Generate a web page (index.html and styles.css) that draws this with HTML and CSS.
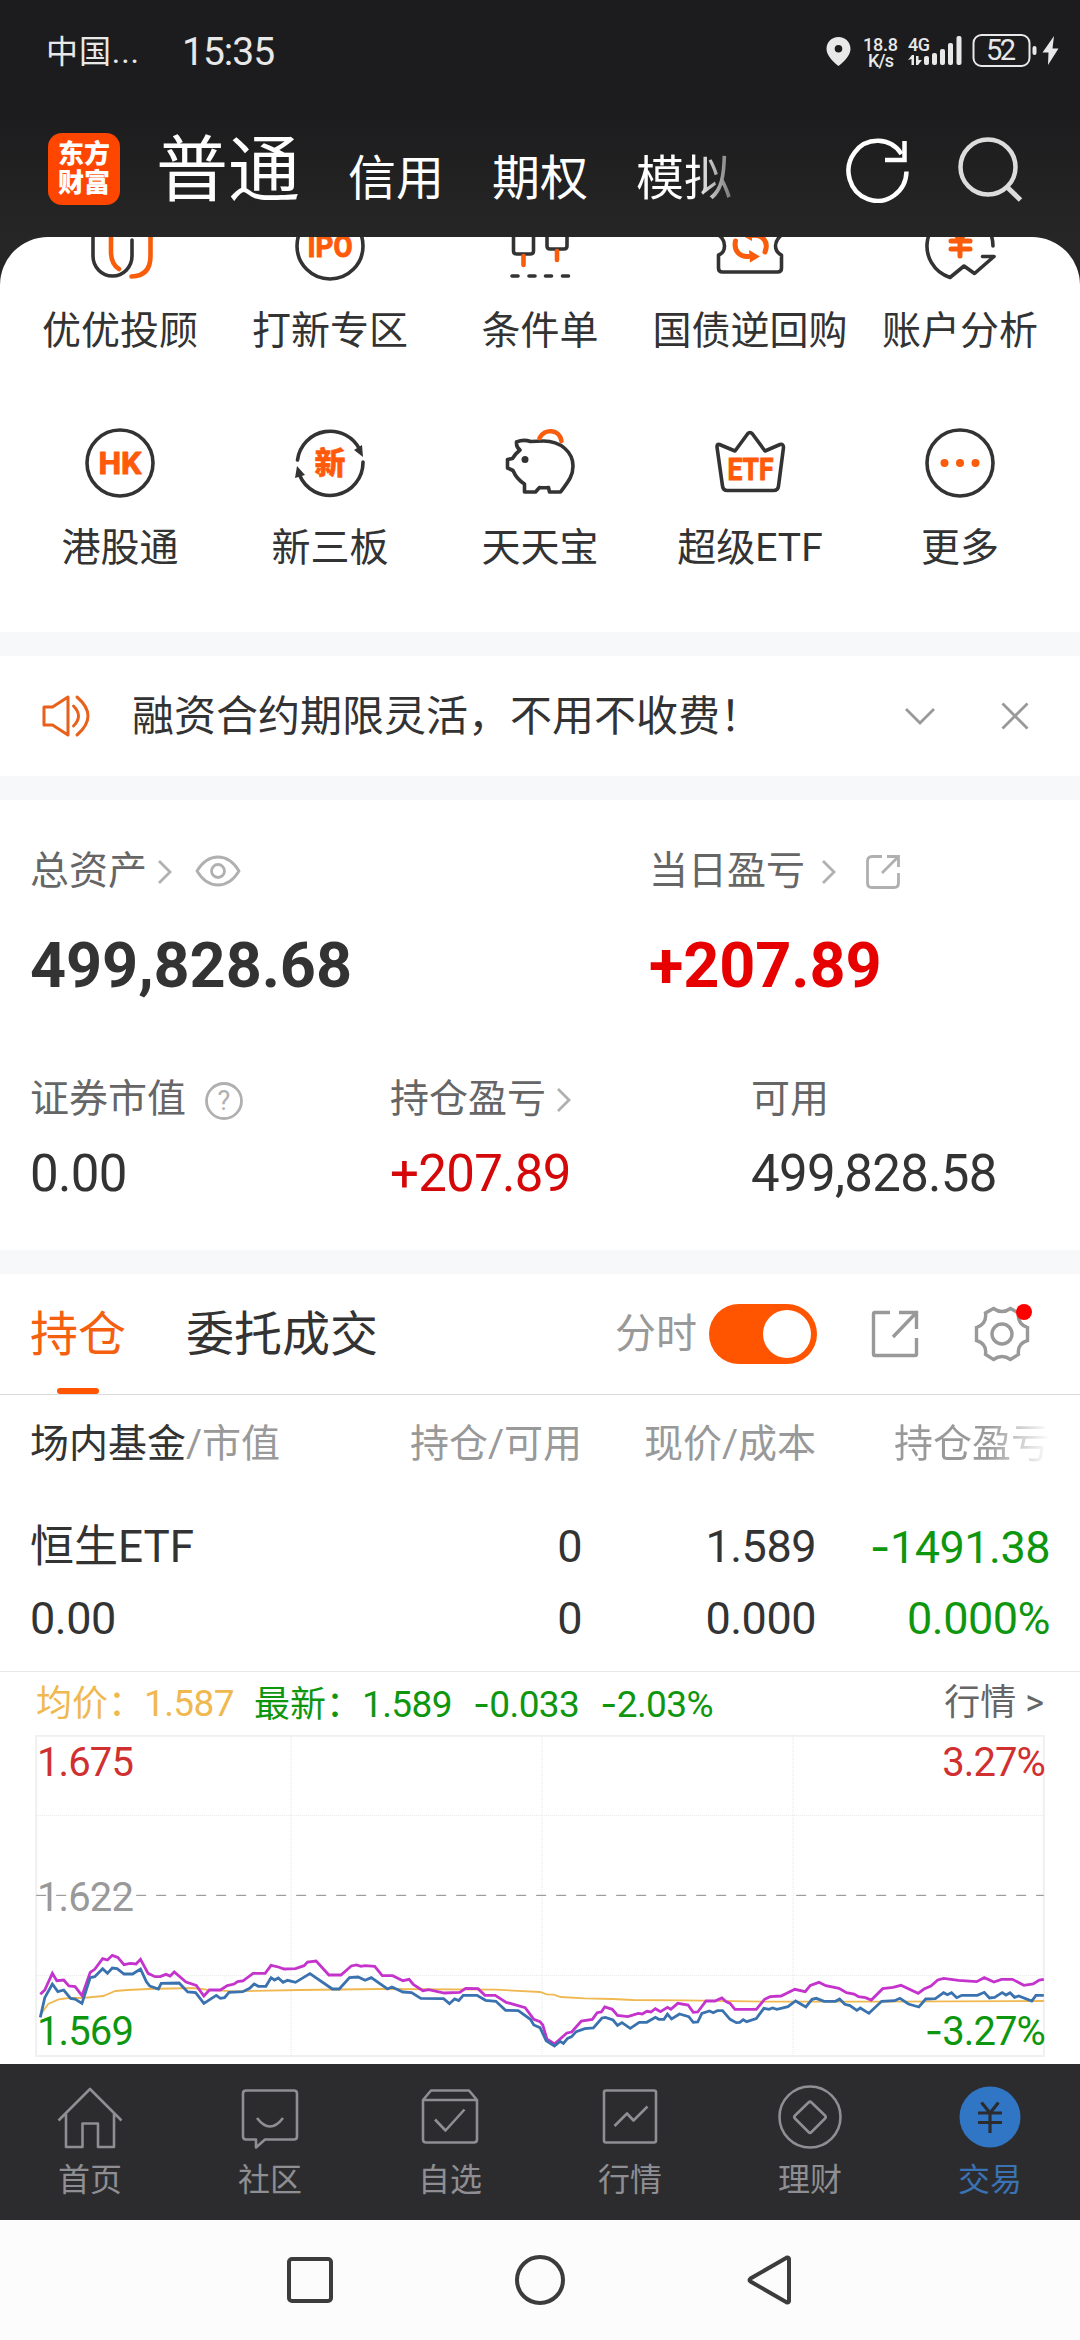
FILE: index.html
```html
<!DOCTYPE html>
<html lang="zh-CN">
<head>
    <meta charset="UTF-8">
    <meta name="viewport" content="width=device-width, initial-scale=1.0">
    <title>东方财富 - 交易</title>
    <link rel="stylesheet" href="styles.css">
</head>
<body>

<div class="phone">

    <!-- Status bar -->
    <div class="status-bar">
        <span class="carrier">中国...</span>
        <span class="clock">15:35</span>
        <svg class="status-icons" width="234" height="40" viewBox="0 0 234 40">
            <path fill="#e8e8e8" fill-rule="evenodd" d="M12.500 5C5.500 5 .500 10 .500 17c0 6 6 12.500 12 17 6-4.500 12-11 12-17 0-7-5-12-12-12zm0 8a3.800 3.800 0 1 1 0 7.600 3.800 3.800 0 0 1 0-7.600z"/>
            <text class="st-small" x="37" y="18.500" textLength="35">18.8</text>
            <text class="st-small" x="42" y="34.500" textLength="26">K/s</text>
            <text class="st-small" x="82" y="18.500" textLength="22">4G</text>
            <g fill="#e8e8e8">
                <path d="M82 28l4-5h2v10h-2.500v-6zM96 28l-4 5h-2V24h2.500v4z"/>
                <rect x="98" y="24" width="5" height="9" rx="2"/>
                <rect x="106" y="21" width="5" height="12" rx="2"/>
                <rect x="114" y="17" width="5" height="16" rx="2"/>
                <rect x="122" y="11" width="5" height="22" rx="2"/>
                <rect x="130.500" y="4" width="5" height="29" rx="2"/>
                <rect x="206.500" y="14" width="4" height="9" rx="2"/>
                <path d="M228 4L216.500 20.500h6L222 33l10.500-16.500h-6z"/>
            </g>
            <rect x="147.500" y="3" width="56" height="31" rx="8" fill="none" stroke="#e8e8e8" stroke-width="2"/>
            <text class="st-battery" x="160" y="28" textLength="30">52</text>
        </svg>
    </div>

    <!-- Header -->
    <header class="header">
        <div class="logo"><span>东方</span><span>财富</span></div>
        <nav class="accounts">
            <a class="active">普通</a>
            <a>信用</a>
            <a>期权</a>
            <a class="fade">模拟</a>
        </nav>
        <svg class="refresh" width="66" height="66" viewBox="0 0 66 66">
            <path d="M62.500 34.500A29 30 0 1 1 57.500 17" fill="none" stroke="#fff" stroke-width="4.500"/>
            <path d="M60.500 4v19H41" fill="none" stroke="#fff" stroke-width="4.500"/>
        </svg>
        <svg class="search" width="66" height="66" viewBox="0 0 66 66">
            <circle cx="31" cy="31" r="27.500" fill="none" stroke="#dcdcdc" stroke-width="4.500"/>
            <path d="M50 51l13.500 13" stroke="#dcdcdc" stroke-width="5"/>
        </svg>
    </header>

    <main class="sheet">

        <!-- Shortcuts -->
        <section class="shortcuts">
            <div class="item">
                <svg class="icon" viewBox="0 0 72 72">
                    <path d="M9 0v46a19.500 20 0 0 0 39 0V30"/>
                    <path class="o" d="M27 10v32q0 12 8 17M66.500 10v36q0 20-19 20.500"/>
                </svg>
                <span>优优投顾</span>
            </div>
            <div class="item">
                <svg class="icon" viewBox="0 0 72 72">
                    <circle cx="36" cy="36" r="33"/>
                    <text x="13.500" y="47" textLength="45" lengthAdjust="spacingAndGlyphs">IPO</text>
                </svg>
                <span>打新专区</span>
            </div>
            <div class="item">
                <svg class="icon" viewBox="0 0 72 72">
                    <path d="M9.500 10v31q0 3 3 3h14q3 0 3-3V10M43 10v26q0 3 3 3h14q3 0 3-3V10"/>
                    <path class="o" d="M19.500 46v9M53 41v9"/>
                    <path d="M8 66h6M25 66h6M41.500 66h6M58.500 66h6"/>
                </svg>
                <span>条件单</span>
            </div>
            <div class="item">
                <svg class="icon" viewBox="0 0 72 72">
                    <path d="M4.500 14v11q6 4 6 11t-6 9v13q0 4 4 4h55q4 0 4-4V45q-6-3-6-9t6-11V14"/>
                    <path class="o thick" d="M21.500 31c-2 10 4 16 13 15.500M51 42c4-10-2-18-14-16.500"/>
                    <path class="of" d="M35 40l11 6.500-10 6zM38 20l-9 6 9 5z"/>
                </svg>
                <span>国债逆回购</span>
            </div>
            <div class="item">
                <svg class="icon" viewBox="0 0 72 72">
                    <path d="M69 36A33 33 0 1 0 26 67.500L40 56l10.500 7.500 19.500-17H58.500"/>
                    <path class="o thick" d="M26 17l10 13 10-13M36 30v16M27 31h19M27 39h19"/>
                </svg>
                <span>账户分析</span>
            </div>
            <div class="item">
                <svg class="icon" viewBox="0 0 72 72">
                    <circle cx="36" cy="36" r="33"/>
                    <text x="14.500" y="47" textLength="43" lengthAdjust="spacingAndGlyphs">HK</text>
                </svg>
                <span>港股通</span>
            </div>
            <div class="item">
                <svg class="icon" viewBox="0 0 72 72">
                    <path d="M3.500 33A33 33 0 0 1 66 23M69 35A33 33 0 0 1 5.500 48"/>
                    <path class="df" d="M60 23l8-5 1 12zM3 39l-2 12 10-3z"/>
                    <text class="cjk" x="20.500" y="47">新</text>
                </svg>
                <span>新三板</span>
            </div>
            <div class="item">
                <svg class="icon" viewBox="0 0 72 72">
                    <path d="M12.500 15q7-3 14-.500 7-.500 13-.500c17 0 29.500 11 29.500 25 0 11-6 17-12.500 26h-11l-1-4.500q-6 .500-9 0L31.500 65h-11v-8Q12.500 52 9 43.500l-5.500-2.500v-8.500l5-1q3-5 7.500-8.500-4-3-3.500-8z"/>
                    <circle class="df" cx="21" cy="32.500" r="3.500"/>
                    <path class="o" d="M35.500 11c5-10 20-9 22 3"/>
                </svg>
                <span>天天宝</span>
            </div>
            <div class="item">
                <svg class="icon" viewBox="0 0 72 72">
                    <path d="M5.500 17.500L21 24 33.500 7q2.500-3 5 0L51 24l15-6.500q3.500-1 3.500 3L64.500 59q-.500 4.500-5 4.500H13.500q-4.500 0-5-4.500L3 20q0-3.500 2.500-2.500z"/>
                    <text x="13.500" y="53" textLength="46" lengthAdjust="spacingAndGlyphs">ETF</text>
                </svg>
                <span>超级ETF</span>
            </div>
            <div class="item">
                <svg class="icon" viewBox="0 0 72 72">
                    <circle cx="36" cy="36" r="33"/>
                    <g class="of"><circle cx="20.500" cy="36" r="4"/><circle cx="36" cy="36" r="4"/><circle cx="51.500" cy="36" r="4"/></g>
                </svg>
                <span>更多</span>
            </div>
        </section>

        <!-- Notice -->
        <section class="notice">
            <svg width="50" height="44" viewBox="0 0 50 44" fill="none" stroke="#e8611c" stroke-width="3" stroke-linejoin="round" stroke-linecap="round">
                <path d="M3 13h8.500L27 3v38L11.500 31H3zM32.500 12q10 10 0 20M36 3q22 19 0 38"/>
            </svg>
            <p>融资合约期限灵活，不用不收费！</p>
            <svg class="down" width="34" height="22" viewBox="0 0 34 22"><path d="M3 4l14 14L31 4"/></svg>
            <svg class="close" width="30" height="30" viewBox="0 0 30 30"><path d="M2.500 2.500l25 25M27.500 2.500l-25 25"/></svg>
        </section>

        <!-- Assets -->
        <section class="assets">
            <div class="total">
                <div>
                    <div class="label"><span>总资产</span>
                        <svg class="arrow" width="18" height="28" viewBox="0 0 18 28"><path d="M3 3l11 11L3 25"/></svg>
                        <svg class="eye" width="46" height="34" viewBox="0 0 46 34"><path d="M2 17C8 7 15 3 23 3s15 4 21 14c-6 10-13 14-21 14S8 27 2 17z"/><circle cx="23" cy="17" r="6.500"/></svg>
                    </div>
                    <div class="big">499,828.68</div>
                </div>
                <div>
                    <div class="label"><span>当日盈亏</span>
                        <svg class="arrow wide" width="18" height="28" viewBox="0 0 18 28"><path d="M3 3l11 11L3 25"/></svg>
                        <svg class="share" width="36" height="36" viewBox="0 0 36 36"><path d="M17 2.500H7q-4.500 0-4.500 4.500v22q0 4.500 4.500 4.500h22q4.500 0 4.500-4.500V19M22 2.500h11.500V13M33 3L17 19"/></svg>
                    </div>
                    <div class="big red">+207.89</div>
                </div>
            </div>
            <div class="detail">
                <div>
                    <div class="label"><span>证券市值</span>
                        <svg class="help" width="40" height="40" viewBox="0 0 40 40"><circle cx="20" cy="20" r="17.500"/><text x="20" y="29">?</text></svg>
                    </div>
                    <div class="num">0.00</div>
                </div>
                <div>
                    <div class="label"><span>持仓盈亏</span>
                        <svg class="arrow" width="18" height="28" viewBox="0 0 18 28"><path d="M3 3l11 11L3 25"/></svg>
                    </div>
                    <div class="num red2">+207.89</div>
                </div>
                <div>
                    <div class="label"><span>可用</span></div>
                    <div class="num">499,828.58</div>
                </div>
            </div>
        </section>

        <!-- Tabs -->
        <section class="tabs">
            <a class="tab active">持仓</a>
            <a class="tab">委托成交</a>
            <span class="switch-label">分时</span>
            <span class="switch"></span>
            <svg class="export" width="48" height="48" viewBox="0 0 48 48"><path d="M19 2.500H4Q2.500 2.500 2.500 4v40q0 1.500 1.500 1.500h40q1.500 0 1.500-1.500V28M28 2.500h17.500V19M45 3L22 27"/></svg>
            <span class="settings">
                <svg width="58" height="58" viewBox="0 0 58 58">
                    <path d="M20.500 3.500q8.500 6 17 0l8 4.500q-1.500 11 9 14.500v13q-10.500 3-9 14l-8 5q-8.500-6-17 0l-8-5q1.500-11-9-14v-13q10.500-3.500 9-14.500z"/>
                    <circle cx="29" cy="29" r="10"/>
                </svg>
                <i class="dot"></i>
            </span>
        </section>

        <!-- Positions -->
        <section class="positions">
            <div class="row head">
                <span><b>场内基金</b>/市值</span><span>持仓/可用</span><span>现价/成本</span><span class="fade-out">持仓盈亏</span>
            </div>
            <div class="row first">
                <span class="name">恒生ETF</span><span>0</span><span>1.589</span><span class="green"><i class="sign">-</i>1491.38</span>
            </div>
            <div class="row">
                <span>0.00</span><span>0</span><span>0.000</span><span class="green">0.000%</span>
            </div>
        </section>

        <!-- Intraday chart -->
        <section class="chart-info">
            <span class="avg">均价：<em>1.587</em></span>
            <span class="last">最新：<em>1.589</em><em><i class="sign">-</i>0.033</em><em><i class="sign">-</i>2.03%</em></span>
            <a>行情 &gt;</a>
        </section>
        <section class="chart">
            <svg width="1080" height="329" viewBox="0 225 3136 987" preserveAspectRatio="none">
                <g class="frame"><rect x="105" y="227" width="2926" height="961"/></g>
                <path class="grid" d="M845 225v963M1574 225v963M2303 225v963M105 466h2926M105 946h2926"/>
                <path class="mid" d="M105 706h2926"/>
                <polyline class="avg-line" points="117,1065 140,1032 170,1018 200,1014 240,1014 300,1008 335,993 370,990 430,987 560,984 600,989 680,994 870,990 1100,987 1440,989 1568,996 1588,1003 1608,1004 1628,1011 1698,1015 1778,1017 1838,1020 1988,1021 2228,1025 2568,1025 3031,1023"/>
                <polyline class="index-line" points="117,1003 130,990 152,940 165,962 185,960 200,978 218,980 238,1007 262,937 275,928 298,896 312,900 326,886 342,892 360,914 378,910 395,912 408,898 430,940 450,950 465,950 482,943 494,948 506,936 540,966 570,976 592,1008 608,990 640,990 660,977 680,972 690,965 705,963 735,940 770,940 787,916 808,921 825,927 858,926 883,917 893,906 918,903 955,945 990,945 1020,918 1035,915 1048,919 1060,917 1088,919 1110,947 1140,947 1170,962 1188,958 1200,973 1228,992 1245,989 1290,999 1335,997 1352,985 1388,986 1408,1006 1438,1006 1470,1027 1525,1043 1550,1078 1568,1085 1576,1095 1588,1137 1610,1152 1646,1119 1660,1116 1688,1083 1720,1078 1734,1058 1746,1056 1756,1041 1778,1048 1793,1066 1823,1070 1853,1060 1865,1062 1878,1054 1890,1056 1903,1046 1918,1055 1938,1042 1948,1048 1968,1030 1998,1035 2013,1057 2026,1056 2050,1023 2076,1023 2096,1014 2108,1025 2120,1030 2134,1048 2196,1048 2220,1018 2236,1010 2268,1008 2308,988 2338,995 2353,976 2378,967 2398,977 2436,985 2458,998 2480,1002 2493,1010 2513,1013 2530,1020 2563,986 2593,982 2616,976 2666,1000 2683,987 2703,978 2723,960 2740,955 2783,961 2836,965 2858,953 2886,966 2908,958 2940,958 2973,976 3000,972 3018,960 3031,958"/>
                <polyline class="price-line" points="117,1072 130,1013 152,972 168,995 185,990 205,1015 218,1017 238,1030 262,953 275,950 298,926 312,940 326,924 340,926 360,942 385,942 408,927 425,965 435,978 460,987 468,970 520,969 545,996 568,998 592,1030 628,1006 640,1015 652,1013 665,997 705,995 725,985 738,972 750,979 772,979 787,953 797,960 808,954 822,967 835,961 858,967 900,941 965,987 985,987 1015,953 1040,951 1060,961 1078,953 1125,987 1138,981 1170,996 1195,998 1222,1015 1288,1016 1305,1031 1320,1017 1332,1022 1345,1006 1385,1006 1410,1021 1440,1024 1468,1051 1505,1052 1540,1078 1550,1095 1568,1103 1586,1142 1610,1158 1626,1144 1636,1150 1648,1135 1660,1130 1673,1115 1698,1106 1723,1104 1748,1074 1758,1072 1780,1080 1793,1096 1806,1088 1830,1105 1856,1087 1878,1087 1903,1072 1913,1078 1928,1078 1938,1062 1950,1077 1973,1062 2000,1070 2013,1087 2026,1086 2038,1060 2060,1053 2071,1058 2083,1052 2098,1052 2120,1078 2138,1088 2148,1087 2158,1079 2168,1085 2196,1076 2218,1045 2233,1048 2243,1044 2256,1048 2288,1040 2310,1023 2340,1041 2358,1018 2370,1015 2393,1024 2426,1024 2438,1017 2453,1033 2468,1037 2488,1051 2498,1044 2523,1060 2560,1024 2598,1022 2613,1015 2638,1032 2668,1041 2688,1017 2716,1016 2740,998 2751,1004 2763,998 2778,1013 2793,1006 2838,1006 2858,997 2873,1014 2888,1012 2910,998 2921,1005 2933,998 2946,1012 2958,1008 2996,1023 3008,1006 3031,1006"/>
            </svg>
            <div class="scale left"><span class="up">1.675</span><span class="flat">1.622</span><span class="low">1.569</span></div>
            <div class="scale right"><span class="up">3.27%</span><span class="low"><i class="sign">-</i>3.27%</span></div>
        </section>
    </main>

    <!-- Bottom navigation -->
    <nav class="bottom-nav">
        <a>
            <svg viewBox="0 0 66 66"><path d="M1.500 36.500L33 5l31.500 31.500M9 30v33h16.500V39.500h15.500V63H57V30"/></svg>
            <span>首页</span>
        </a>
        <a>
            <svg viewBox="0 0 66 66"><path d="M9 6.500h48q3 0 3 3v43q0 3-3 3H28l-9 8v-8H9q-3 0-3-3v-43q0-3 3-3zM20 34q13 17 26 0"/></svg>
            <span>社区</span>
        </a>
        <a>
            <svg viewBox="0 0 66 66"><path d="M6 16l8-9.500h38l8 9.500v39.500q0 3-3 3H9q-3 0-3-3zM6 16h54M18 35.500l10.500 11 19-21"/></svg>
            <span>自选</span>
        </a>
        <a>
            <svg viewBox="0 0 66 66"><path d="M9 6.500h48q2 0 2 2v48q0 2-2 2H9q-2 0-2-2v-48q0-2 2-2zM17.500 42L30 29.500l6.500 7 14-14"/></svg>
            <span>行情</span>
        </a>
        <a>
            <svg viewBox="0 0 66 66"><circle cx="33" cy="33" r="30.500"/><path d="M31.500 18.500q1.500-1.500 3 0l13.500 13q1.500 1.500 0 3l-13.500 13.500q-1.500 1.500-3 0L18 34.500q-1.500-1.500 0-3z"/></svg>
            <span>理财</span>
        </a>
        <a class="active">
            <svg viewBox="0 0 66 66"><circle class="disc" cx="33" cy="33" r="30.500"/><path class="yuan" d="M24.500 18.500L33 29l8.500-10.500M33 28v21M21 29h24M21 38.500h24"/></svg>
            <span>交易</span>
        </a>
    </nav>

    <!-- System navigation -->
    <div class="system-nav">
        <svg viewBox="0 0 54 54"><rect x="6" y="6" width="42" height="42" rx="3"/></svg>
        <svg viewBox="0 0 54 54"><circle cx="27" cy="27" r="23"/></svg>
        <svg viewBox="0 0 54 54"><path d="M44 4.500q2 0 2 2v41q0 2-2 2L7.500 28.500q-2-1.500 0-3z"/></svg>
    </div>

</div>

</body>
</html>
```
FILE: styles.css
```css
* {
    margin: 0;
    padding: 0;
    box-sizing: border-box;
}

body {
    font-family: Roboto, 'Noto Sans CJK SC', sans-serif;
    color: #333;
    background-color: #fff;
}

svg {
    display: block;
    flex-shrink: 0;
}

.phone {
    width: 1080px;
    height: 2340px;
    display: flex;
    flex-direction: column;
    overflow: hidden;
    background: linear-gradient(#1c1c1e 0, #1c1c1e 110px, #262626 237px);
}

/* Status bar */
.status-bar {
    height: 104px;
    display: flex;
    align-items: center;
    padding: 0 20px 0 46px;
    line-height: 48px;
    color: #e8e8e8;
}

.carrier {
    width: 136px;
    font-size: 32px;
    letter-spacing: 0.9px;
}

.clock {
    font-size: 39px;
    letter-spacing: -1px;
}

.status-icons {
    margin-left: auto;
}

.status-icons text {
    fill: #e8e8e8;
}

.status-icons .st-small {
    font-size: 18px;
    font-weight: 500;
}

.status-icons .st-battery {
    font-size: 29px;
    font-weight: 400;
}

/* Header */
.header {
    height: 133px;
    display: flex;
    align-items: flex-start;
    padding: 0 57px 0 48px;
    color: #fff;
}

.logo {
    width: 72px;
    height: 72px;
    margin-top: 29px;
    border-radius: 14px;
    background-color: #ff4600;
    display: flex;
    flex-direction: column;
    align-items: center;
    justify-content: center;
    font-size: 26px;
    font-weight: 900;
    line-height: 29px;
}

.accounts {
    display: flex;
    align-items: baseline;
    gap: 48px;
    margin: 12px 0 0 36px;
    font-size: 48px;
    line-height: 110px;
    height: 110px;
}

.accounts .active {
    font-size: 72px;
}

.accounts .fade {
    background: linear-gradient(90deg, #fff 60%, #777 100%);
    -webkit-background-clip: text;
    background-clip: text;
    color: transparent;
}

.refresh {
    margin: 33px 0 0 auto;
}

.search {
    margin: 32px 0 0 47px;
}

.sheet {
    height: 1827px;
    background-color: #fff;
    border-radius: 48px 48px 0 0;
    overflow: hidden;
}

.shortcuts {
    display: grid;
    grid-template-columns: repeat(5, 210px);
    justify-content: center;
    row-gap: 72px;
    margin-top: -27px;
    padding-bottom: 60px;
    border-bottom: 24px solid #f7f8fa;
}

.item {
    display: flex;
    flex-direction: column;
    align-items: center;
    gap: 25px;
    font-size: 39px;
    line-height: 48px;
    white-space: nowrap;
}

.icon {
    width: 72px;
    height: 72px;
    fill: none;
    stroke: #333;
    stroke-width: 3.6;
    stroke-linecap: round;
    stroke-linejoin: round;
}

.icon .o {
    stroke: #f95d0c;
    stroke-width: 4.6;
}

.icon .thick {
    stroke-width: 5;
}

.icon .of {
    fill: #f95d0c;
    stroke: none;
}

.icon .df {
    fill: #333;
    stroke: none;
}

.icon text {
    fill: #ff5a0a;
    stroke: #ff5a0a;
    stroke-width: 1;
    font-size: 31px;
    font-weight: 700;
}

.icon .cjk {
    font-size: 31px;
    font-weight: 900;
    stroke-width: 0.5;
}

/* Notice */
.notice {
    height: 144px;
    display: flex;
    align-items: center;
    padding-left: 41px;
    border-bottom: 24px solid #f7f8fa;
}

.notice p {
    width: 771px;
    margin-left: 41px;
    font-size: 42px;
    line-height: 120px;
    padding-top: 2px;
}

.notice .down,
.notice .close {
    fill: none;
    stroke: #999;
    stroke-width: 2.8;
}

.notice .close {
    margin-left: 63px;
}

/* Assets */
.assets {
    height: 474px;
    padding: 43px 30px 0;
    border-bottom: 24px solid #f7f8fa;
}

.total {
    display: grid;
    grid-template-columns: 619px 1fr;
}

.detail {
    display: grid;
    grid-template-columns: 360px 361px 1fr;
    margin-top: 61px;
}

.label {
    display: flex;
    align-items: center;
    height: 56px;
    font-size: 39px;
    line-height: 57px;
    color: #666;
}

.label svg {
    fill: none;
    stroke: #b0b0b0;
    stroke-width: 2.8;
}

.label .arrow {
    margin: 2px 0 0 9px;
}

.label .wide {
    margin-left: 15px;
}

.label .eye {
    margin-left: 21px;
}

.label .share {
    margin: 2px 0 0 27px;
}

.label .help {
    margin: 4px 0 0 18px;
}

.help text {
    fill: #b0b0b0;
    stroke: none;
    font-size: 27px;
    text-anchor: middle;
}

.big {
    height: 111px;
    line-height: 134px;
    font-size: 63px;
    font-weight: 700;
    letter-spacing: -0.1px;
}

.num {
    line-height: 94px;
    font-size: 51px;
    letter-spacing: -0.7px;
}

.red {
    color: #e60000;
}

.red2 {
    color: #d40808;
}

.green {
    color: #0f960f;
}

/* Longer minus for negative numbers */
.sign {
    font-family: Inter, sans-serif;
    font-style: normal;
}

/* Tabs */
.tabs {
    height: 121px;
    display: flex;
    align-items: center;
    padding-left: 30px;
    border-bottom: 1px solid #dcdcdc;
}

.tab {
    height: 120px;
    margin-right: 60px;
    font-size: 48px;
    line-height: 122px;
    display: flex;
    flex-direction: column;
    align-items: center;
}

.tab.active {
    color: #f4600f;
}

.tab.active::after {
    content: '';
    width: 42px;
    height: 6px;
    margin-top: -8px;
    border-radius: 3px;
    background-color: #ff5400;
    flex-shrink: 0;
}

.switch-label {
    margin-left: auto;
    font-size: 41px;
    line-height: 120px;
    color: #999;
}

.switch {
    width: 108px;
    height: 60px;
    margin-left: 12px;
    padding: 6px;
    border-radius: 30px;
    background-color: #ff5400;
    display: flex;
    justify-content: flex-end;
}

.switch::after {
    content: '';
    width: 48px;
    height: 48px;
    border-radius: 50%;
    background-color: #fff;
}

.export,
.settings svg {
    fill: none;
    stroke: #999;
    stroke-width: 3.4;
}

.export {
    margin-left: 54px;
}

.settings {
    position: relative;
    margin: 0 49px 0 54px;
}

.dot {
    position: absolute;
    top: -1px;
    right: -1px;
    width: 16px;
    height: 16px;
    border-radius: 50%;
    background-color: #f00;
}

/* Positions */
.positions {
    height: 277px;
    border-bottom: 1px solid #e8e8e8;
}

.row {
    display: grid;
    grid-template-columns: 352px 200px 234px 234px;
    padding-left: 30px;
    font-size: 45px;
    line-height: 72px;
    letter-spacing: -0.5px;
    text-align: right;
}

.row > :first-child {
    text-align: left;
}

.row .name {
    font-size: 44px;
    letter-spacing: 0;
}

.head {
    font-size: 39px;
    line-height: 98px;
    height: 97px;
    letter-spacing: 0;
    color: #999;
}

.head b {
    font-weight: 400;
    color: #333;
}

.first {
    padding-top: 19px;
    height: 91px;
}

.fade-out {
    justify-self: end;
    background: linear-gradient(90deg, #999 60%, #fff 100%);
    -webkit-background-clip: text;
    background-clip: text;
    color: transparent;
}

/* Intraday chart */
.chart-info {
    height: 63px;
    display: flex;
    padding: 0 36px;
    font-size: 36px;
    line-height: 63px;
}

.chart-info em {
    font-style: normal;
    font-size: 37px;
    letter-spacing: -0.6px;
    margin-right: 20px;
}

.avg {
    color: #f0b850;
}

.last {
    color: #0f960f;
}

.last em + em {
    margin-left: 1px;
}

.chart-info a {
    margin-left: auto;
    color: #666;
}

.chart {
    position: relative;
    height: 329px;
}

.chart svg * {
    fill: none;
    vector-effect: non-scaling-stroke;
}

.frame {
    stroke: #f0f0f0;
    stroke-width: 2;
}

.grid {
    stroke: #e6e6e6;
    stroke-width: 1;
    stroke-dasharray: 1 1;
}

.mid {
    stroke: #888;
    stroke-width: 1;
    stroke-dasharray: 10 10;
}

.avg-line {
    stroke: #f0b850;
    stroke-width: 1.8;
}

.index-line {
    stroke: #c433cc;
    stroke-width: 2.8;
}

.price-line {
    stroke: #3a72b0;
    stroke-width: 2.8;
}

/* Price and percent labels laid over the plot */
.scale {
    position: absolute;
    top: 4px;
    height: 316px;
    display: flex;
    flex-direction: column;
    justify-content: space-between;
    font-size: 40px;
    line-height: 47px;
    letter-spacing: -0.9px;
}

.scale.left {
    left: 37px;
}

.scale.right {
    right: 35px;
    text-align: right;
}

.up {
    color: #d03030;
}

.flat {
    color: #999;
}

.low {
    color: #0f960f;
}

/* Bottom navigation */
.bottom-nav {
    height: 156px;
    display: grid;
    grid-template-columns: repeat(6, 180px);
    padding-top: 20px;
    background-color: #2c2c2e;
}

.bottom-nav a {
    display: flex;
    flex-direction: column;
    align-items: center;
    gap: 9px;
    font-size: 32px;
    line-height: 42px;
    color: #8e8e93;
}

.bottom-nav svg {
    width: 66px;
    height: 66px;
    fill: none;
    stroke: #8e8e93;
    stroke-width: 2.6;
    stroke-linejoin: round;
}

.bottom-nav .active {
    color: #3a72b4;
}

.bottom-nav .disc {
    fill: #3176c4;
    stroke: none;
}

.bottom-nav .yuan {
    stroke: #2c2c2e;
    stroke-width: 3.2;
}

/* System navigation */
.system-nav {
    height: 120px;
    display: flex;
    align-items: center;
    justify-content: center;
    gap: 176px;
    background-color: #fcfcfc;
}

.system-nav svg {
    width: 54px;
    height: 54px;
    fill: none;
    stroke: #3c3c3c;
    stroke-width: 4;
}
```
